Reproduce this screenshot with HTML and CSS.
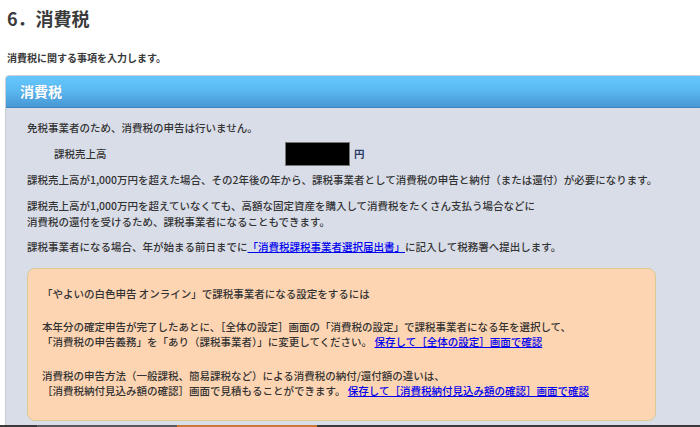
FILE: index.html
```html
<!DOCTYPE html>
<html lang="ja">
<head>
<meta charset="utf-8">
<link rel="stylesheet" href="styles.css">
</head>
<body>
<div class="page">
  <h1 class="title">6．消費税</h1>
  <p class="lead">消費税に関する事項を入力します。</p>
  <section class="panel">
    <div class="panel-head">消費税</div>
    <div class="panel-body">
      <p class="line">免税事業者のため、消費税の申告は行いません。</p>
      <div class="sales-row">
        <span class="sales-label">課税売上高</span>
        <span class="sales-box"></span>
        <span class="yen">円</span>
      </div>
      <p class="para3">課税売上高が1,000万円を超えた場合、その2年後の年から、課税事業者として消費税の申告と納付（または還付）が必要になります。</p>
      <p class="para4">課税売上高が1,000万円を超えていなくても、高額な固定資産を購入して消費税をたくさん支払う場合などに<br>消費税の還付を受けるため、課税事業者になることもできます。</p>
      <p class="para5">課税事業者になる場合、年が始まる前日までに<a href="#" class="link">「消費税課税事業者選択届出書」</a>に記入して税務署へ提出します。</p>
      <div class="notice">
        <p class="n1">「やよいの白色申告 オンライン」で課税事業者になる設定をするには</p>
        <p class="n2">本年分の確定申告が完了したあとに、［全体の設定］画面の「消費税の設定」で課税事業者になる年を選択して、<br>「消費税の申告義務」を「あり（課税事業者）」に変更してください。 <a href="#" class="link">保存して［全体の設定］画面で確認</a></p>
        <p class="n3">消費税の申告方法（一般課税、簡易課税など）による消費税の納付/還付額の違いは、<br>［消費税納付見込み額の確認］画面で見積もることができます。 <a href="#" class="link">保存して［消費税納付見込み額の確認］画面で確認</a></p>
      </div>
    </div>
  </section>
</div>
<div class="bottombar">
  <span class="seg seg-dark1"></span>
  <span class="seg seg-gray"></span>
  <span class="seg seg-orange"></span>
</div>
</body>
</html>
```

FILE: styles.css
```css
html, body {
  margin: 0;
  padding: 0;
  background: #ffffff;
  overflow: hidden;
  height: 427px;
}
body {
  font-family: "Noto Sans CJK JP", "Noto Sans", sans-serif;
  color: #333333;
}
.page {
  padding-left: 5px;
}
.title {
  margin: 0;
  padding: 5px 0 0 2px;
  font-size: 18px;
  line-height: 26px;
  font-weight: bold;
  color: #3b3b3b;
}
.lead {
  margin: 20px 0 0 2px;
  font-size: 10px;
  line-height: 14px;
  font-weight: bold;
  color: #383838;
}
.panel {
  margin-top: 10px;
  width: 720px;
  border: 1px solid #c9ced8;
  border-radius: 4px 4px 0 0;
  background: #d9dde8;
  height: 360px;
}
.panel-head {
  height: 31px;
  line-height: 30px;
  padding-left: 14px;
  color: #ffffff;
  font-size: 14px;
  font-weight: bold;
  background: linear-gradient(to bottom, #64c7fe 0%, #5cb9f2 45%, #4797d3 100%);
  border-bottom: 1px solid #3d86bf;
  border-radius: 3px 3px 0 0;
  text-shadow: 0 0 1px rgba(0,0,0,0.15);
}
.panel-body {
  padding: 12px 0 0 21px;
  font-size: 10.5px;
  line-height: 16px;
  font-weight: 500;
}
.panel-body p {
  margin: 0;
}
.sales-row {
  display: flex;
  align-items: center;
  margin-top: 6px;
  height: 24px;
}
.sales-label {
  width: 258px;
  padding-left: 27px;
  box-sizing: border-box;
}
.sales-box {
  width: 65px;
  height: 24px;
  background: #000;
  border: 1px solid #777;
  box-sizing: border-box;
}
.yen {
  margin-left: 4px;
  color: #2c3e6a;
  font-weight: bold;
}
.panel-body .para3 {
  margin-top: 6px;
}
.panel-body .para4 {
  margin-top: 10px;
}
.panel-body .para5 {
  margin-top: 9px;
}
.link {
  color: #0000ee;
  text-decoration: underline;
}
.notice {
  margin-top: 13px;
  width: 629px;
  box-sizing: border-box;
  background: #fed5b2;
  border: 1px solid #d9cb94;
  border-radius: 8px;
  padding: 17px 0 22px 14px;
  line-height: 15px;
}
.panel-body .notice .n2 {
  margin-top: 18px;
}
.panel-body .notice .n3 {
  margin-top: 19px;
}
.bottombar {
  position: fixed;
  left: 0;
  bottom: 0;
  width: 700px;
  height: 2px;
  background: #3a3a3a;
  display: flex;
}
.seg {
  display: block;
  height: 2px;
}
.seg-dark1 { width: 37px; }
.seg-gray { width: 140px; background: #5a5a5a; }
.seg-orange { width: 140px; background: #c8783a; }
```
